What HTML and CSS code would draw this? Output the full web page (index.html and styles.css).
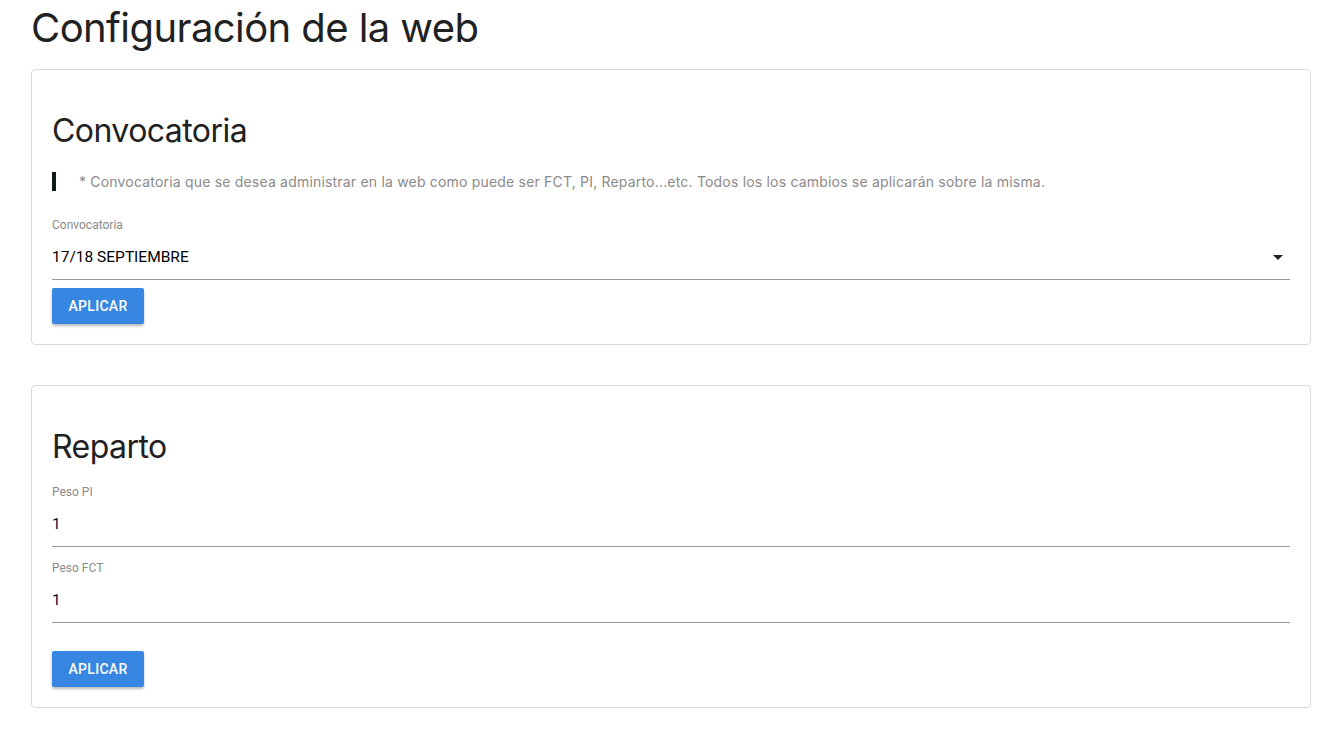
FILE: index.html
```html
<!DOCTYPE html>
<html lang="es">
<head>
<meta charset="utf-8">
<title>Configuración de la web</title>
<link rel="stylesheet" href="styles.css">
</head>
<body>
<main class="page">
  <h1 class="page-title">Configuración de la web</h1>

  <section class="card card-convocatoria">
    <h2 class="card-title">Convocatoria</h2>
    <blockquote class="note">* Convocatoria que se desea administrar en la web como puede ser FCT, PI, Reparto...etc. Todos los los cambios se aplicarán sobre la misma.</blockquote>
    <div class="field">
      <label class="field-label">Convocatoria</label>
      <div class="field-value select">
        <span>17/18 SEPTIEMBRE</span>
        <span class="caret"></span>
      </div>
    </div>
    <button class="btn btn-first">APLICAR</button>
  </section>

  <section class="card card-reparto">
    <h2 class="card-title">Reparto</h2>
    <div class="field">
      <label class="field-label">Peso PI</label>
      <div class="field-value input">1</div>
    </div>
    <div class="field field-next">
      <label class="field-label">Peso FCT</label>
      <div class="field-value input">1</div>
    </div>
    <button class="btn btn-second">APLICAR</button>
  </section>
</main>
</body>
</html>
```

FILE: styles.css
```css
* { box-sizing: border-box; }

html, body {
  margin: 0;
  padding: 0;
  background: #ffffff;
}

body {
  font-family: Inter, "Liberation Sans", Arial, sans-serif;
  color: #212121;
}

.page {
  padding: 0 26px 30px 31px;
}

.page-title {
  font-size: 40px;
  font-weight: 400;
  line-height: 48px;
  letter-spacing: -0.58px;
  margin: 4px 0 17px;
  color: #212121;
}

.card {
  border: 1px solid #dadada;
  border-radius: 4px;
  padding: 20px 20px 20px 20px;
  background: #fff;
}

.card + .card {
  margin-top: 40px;
}

.card-title {
  font-size: 32px;
  font-weight: 400;
  line-height: 38px;
  letter-spacing: -0.55px;
  margin: 22px 0 0;
  color: #212121;
}

.note {
  margin: 22px 0 0;
  border-left: 4px solid #0f1a1a;
  padding-left: 23px;
  font-size: 14px;
  line-height: 19px;
  letter-spacing: 0.19px;
  color: #8a8a8a;
}

.field {
  position: relative;
}

.card-convocatoria .field { margin-top: 27px; }
.card-reparto .field { margin-top: 19px; }
.card-reparto .field-next { margin-top: 14px; }

.field-label {
  display: block;
  font-family: Roboto, "Liberation Sans", Arial, sans-serif;
  font-size: 12px;
  line-height: 14px;
  color: #8a8a8a;
}

.field-value {
  font-family: Roboto, "Liberation Sans", Arial, sans-serif;
  font-size: 15.5px;
  line-height: 20px;
  padding: 15px 0 12px;
  border-bottom: 1px solid #9a9a9a;
  color: #000;
}

.input { color: #0a0a3a; }

.select {
  display: flex;
  justify-content: space-between;
  align-items: center;
  padding-right: 7px;
}

.caret {
  width: 0;
  height: 0;
  border-left: 5px solid transparent;
  border-right: 5px solid transparent;
  border-top: 5px solid #222;
}

.btn {
  display: block;
  width: 92px;
  height: 36px;
  border: 0;
  border-radius: 2px;
  background: #3686e2;
  color: #fff;
  font-family: Roboto, "Liberation Sans", Arial, sans-serif;
  font-size: 14px;
  font-weight: 500;
  letter-spacing: 0.3px;
  box-shadow: 0 2px 3px rgba(0,0,0,0.28);
  padding: 0;
}

.btn-first { margin-top: 8px; }
.btn-second { margin-top: 28px; }
```
